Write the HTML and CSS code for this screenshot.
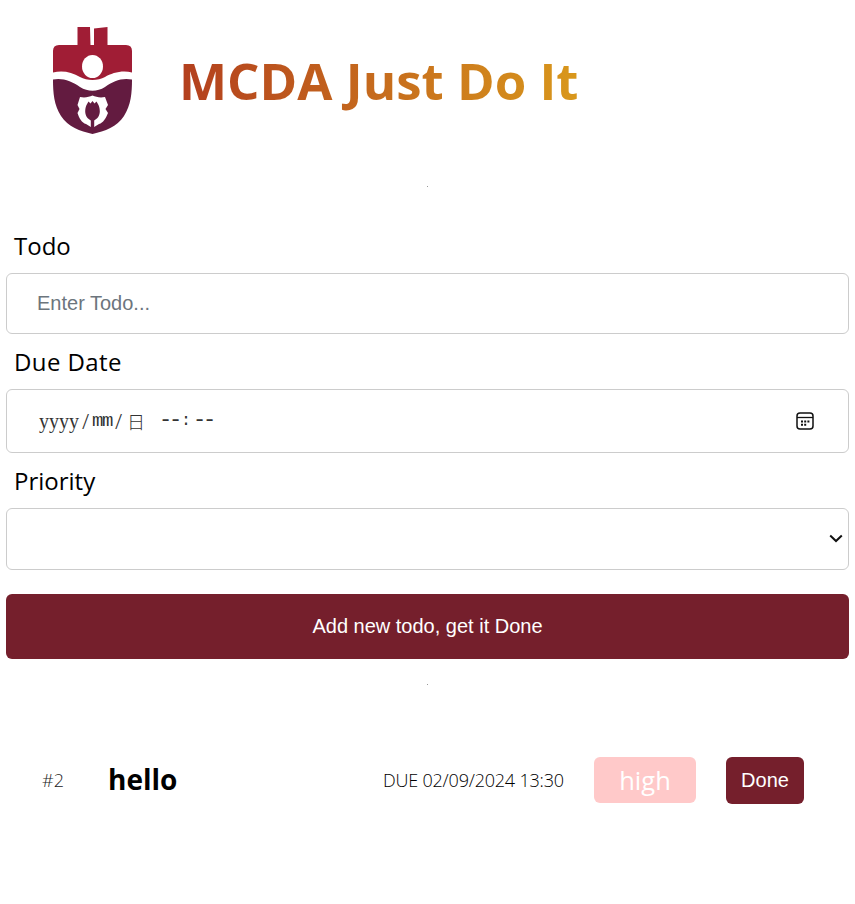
FILE: index.html
```html
<!DOCTYPE html>
<html lang="en">
<head>
<meta charset="utf-8">
<title>MCDA Just Do It</title>
<link rel="stylesheet" href="styles.css">
</head>
<body>
<header class="brand">
  <svg class="logo" viewBox="50 24 86 112" width="86" height="112" aria-hidden="true">
    <path fill="#a01d35" d="M77.500 26 H90 L90.500 44 H77.500 Z M94 27.500 L107.500 26 V44 H94 Z"/>
    <path fill="#a01d35" d="M53 71.500 V50 Q53 44 59 44 H126 Q132 44 132 50 V71.500 C122 69 112 72 105 76 C98 80 87 80 80 76 C72 71 62 69 53 71.500 Z"/>
    <ellipse cx="92.500" cy="65.500" rx="10.500" ry="11.500" fill="#fff"/>
    <path fill="#631b40" d="M53 78.500 C62 76.500 72 80 80 86 C88 91 97 91 105 86 C113 80 122 76.500 132 78.500 C132 92 131 104 124 115 C117 126 105 130 92.500 133 C80 130 68 126 61 115 C54 104 53 92 53 78.500 Z"/>
    <path fill="#fff" d="M80 96 C85 97 89 96 92.500 94.500 C96 96 100 97 105 96 L108 104 L105.500 108 L108 112 C106 117 103 122 99 123 L92.500 127 L86 123 C82 122 79 117 77.500 112 L79.500 108 L77.500 104 Z"/>
    <path fill="#631b40" d="M86.500 104 L88.500 100.500 L90.500 102.500 L92.500 100 L94.500 102.500 L96.500 100.500 L98.500 104 C99.300 106 99.800 108 99.800 110.500 C99.800 115 97 118 94.200 119.500 V127 H90.800 V119.500 C88 118 85.200 115 85.200 110.500 C85.200 108 85.700 106 86.500 104 Z"/>
  </svg>
  <h1 class="title">MCDA Just Do It</h1>
</header>
<hr class="dot">
<form class="form">
  <label class="label label-todo" for="todo">Todo</label>
  <input class="field field-todo" id="todo" type="text" placeholder="Enter Todo...">
  <label class="label label-date" for="due">Due Date</label>
  <div class="field field-date" id="due">
    <span class="date-text"><span class="seg serif">yyyy</span><span class="seg serif slash">/</span><span class="seg months">mm</span><span class="seg serif slash">/</span><span class="seg cjk">日</span><span class="seg dash gap">--</span><span class="seg">:</span><span class="seg dash">--</span></span>
    <svg class="cal" viewBox="0 0 18 18" width="18" height="18" aria-hidden="true">
      <rect x="1" y="1" width="16" height="16" rx="3" fill="none" stroke="#111" stroke-width="1.500"/>
      <path d="M1 5.500 H17" stroke="#111" stroke-width="1.300"/>
      <path d="M5 8.500h2v2H5zM8.200 8.500h2v2h-2zM11.400 8.500h2v2h-2zM5 11.800h2v2H5zM8.200 11.800h2v2h-2z" fill="#111"/>
    </svg>
  </div>
  <label class="label label-priority" for="priority">Priority</label>
  <div class="select-wrap">
    <select class="field field-select" id="priority">
      <option></option>
    </select>
    <svg class="chev" viewBox="0 0 14 9" width="14" height="9" aria-hidden="true">
      <path d="M1.200 1.500 L7 7 L12.800 1.500" fill="none" stroke="#111" stroke-width="2"/>
    </svg>
  </div>
  <button class="submit" type="button">Add new todo, get it Done</button>
</form>
<hr class="dot dot-lower">
<section class="todo-row">
  <span class="num">#2</span>
  <span class="name">hello</span>
  <span class="due">DUE 02/09/2024 13:30</span>
  <span class="badge">high</span>
  <button class="done" type="button">Done</button>
</section>
</body>
</html>
```
FILE: styles.css
```css
* { box-sizing: border-box; }
html, body { margin: 0; padding: 0; }
body {
  background: #fff;
  color: #000;
  font-family: "Open Sans", "Noto Sans", sans-serif;
  padding: 0 6px;
  height: 904px;
  overflow: hidden;
}
.brand {
  display: flex;
  align-items: center;
  height: 162px;
  padding-left: 44px;
  gap: 43px;
}
.logo { display: block; flex: none; margin-top: -1px; }
.title {
  margin: 0;
  font-size: 51px;
  line-height: 1.2;
  font-weight: 700;
  background: linear-gradient(90deg, #b33f1e, #d9981c);
  -webkit-background-clip: text;
  background-clip: text;
  color: transparent;
}
.dot {
  width: 1px;
  height: 1px;
  margin: 24px auto 0;
  border: 0;
  background: #999;
}
.form { display: flex; flex-direction: column; margin-top: 43px; }
.label {
  display: block;
  margin-left: 8px;
  font-size: 24px;
  line-height: 32px;
}
.label-todo { margin-bottom: 11px; }
.label-date { margin-top: 12px; margin-bottom: 11px; letter-spacing: 0.4px; }
.label-priority { margin-top: 12px; margin-bottom: 11px; }
.field {
  display: block;
  width: 100%;
  border: 1px solid #ccc;
  border-radius: 6px;
  background: #fff;
  padding: 0 30px;
  color: #000;
}
.field-todo {
  height: 61px;
  font: 20px "Liberation Sans", Arial, sans-serif;
  outline: none;
}
.field-todo::placeholder { color: #6c757d; opacity: 1; }
.field-date {
  height: 64px;
  display: flex;
  align-items: center;
  justify-content: space-between;
  padding-right: 34px;
}
.date-text {
  display: flex;
  align-items: center;
  margin-left: 1px;
  font-family: "Liberation Mono", monospace;
  font-size: 16.670px;
  line-height: 24px;
  color: #333;
}
.seg { padding: 0 1px; }
.serif { font-family: "Liberation Serif", serif; font-size: 20px; }
.slash { width: 11px; font-size: 24px; text-align: center; }
.months { font-size: 19px; letter-spacing: -1.400px; }
.cjk {
  width: 22px;
  margin-left: 2px;
  font-family: "Noto Sans CJK SC", sans-serif;
  font-weight: 300;
  font-size: 18px;
}
.dash { font-size: 22px; letter-spacing: -3.200px; }
.gap { margin-left: 10px; }
.cal { display: block; flex: none; }
.select-wrap { position: relative; }
.field-select {
  height: 62px;
  appearance: none;
  -webkit-appearance: none;
  font: 20px "Liberation Sans", Arial, sans-serif;
}
.chev { position: absolute; right: 6px; top: 26px; pointer-events: none; }
.submit {
  display: block;
  width: 100%;
  height: 65px;
  margin-top: 24px;
  border: 0;
  border-radius: 6px;
  background: #751f2c;
  color: #fff;
  font: 20px "Liberation Sans", Arial, sans-serif;
}
.dot-lower { margin-top: 25px; }
.todo-row {
  display: flex;
  align-items: center;
  height: 48px;
  margin-top: 71px;
  padding-left: 36px;
}
.num {
  width: 66px;
  font-size: 18px;
  font-weight: 300;
  color: #222;
}
.name {
  width: 275px;
  padding-bottom: 2px;
  font-size: 28px;
  font-weight: 700;
}
.due {
  width: 211px;
  font-size: 18px;
  font-weight: 300;
  letter-spacing: -0.2px;
  white-space: nowrap;
}
.badge {
  display: flex;
  align-items: center;
  justify-content: center;
  width: 102px;
  height: 46px;
  border-radius: 6px;
  background: #ffc9c9;
  color: #fff;
  font-size: 25.500px;
  font-weight: 500;
}
.done {
  width: 78px;
  height: 47px;
  margin-left: 30px;
  border: 0;
  border-radius: 6px;
  background: #751f2c;
  color: #fff;
  font: 20px "Liberation Sans", Arial, sans-serif;
}
```
